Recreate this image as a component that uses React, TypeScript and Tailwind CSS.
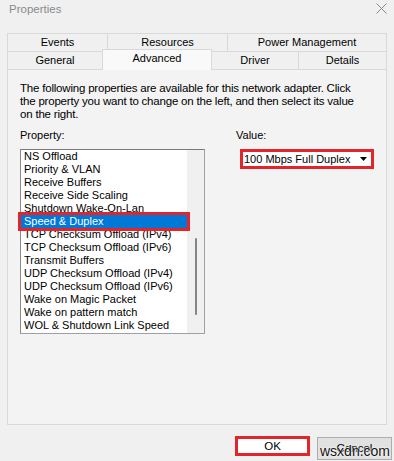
const items = [
  "NS Offload",
  "Priority & VLAN",
  "Receive Buffers",
  "Receive Side Scaling",
  "Shutdown Wake-On-Lan",
  "Speed & Duplex",
  "TCP Checksum Offload (IPv4)",
  "TCP Checksum Offload (IPv6)",
  "Transmit Buffers",
  "UDP Checksum Offload (IPv4)",
  "UDP Checksum Offload (IPv6)",
  "Wake on Magic Packet",
  "Wake on pattern match",
  "WOL & Shutdown Link Speed",
];

export default function App() {
  return (
    <div className="relative w-[394px] h-[461px] bg-[#f0f0f0] flex flex-col text-[11px] leading-[13px] text-black overflow-hidden font-['Liberation_Sans',Arial,sans-serif]">
      {/* Title bar */}
      <div className="h-[33px] flex items-start justify-between">
        <div className="pl-[9px] pt-[3px] text-[11.5px] text-[#8a8a8a]">Properties</div>
        <svg className="mr-[7px] mt-[3px]" width="11" height="11" viewBox="0 0 11 11">
          <path d="M0.5 0.5 L10.5 10.5 M10.5 0.5 L0.5 10.5" stroke="#8a8a8a" strokeWidth="1" fill="none" />
        </svg>
      </div>

      {/* Tabs + panel */}
      <div className="ml-[7px] w-[380px] flex flex-col">
        <div className="flex h-[18px]">
          <div className="w-[100px] border-t border-l border-[#d9d9d9] flex items-center justify-center">Events</div>
          <div className="w-[120px] border-t border-l border-[#d9d9d9] flex items-center justify-center">Resources</div>
          <div className="flex-1 border-t border-l border-r border-[#d9d9d9] flex items-center justify-center">Power Management</div>
        </div>
        <div className="flex h-[18px] items-end">
          <div className="w-[95px] h-[18px] border-t border-l border-[#d9d9d9] flex items-center justify-center">General</div>
          <div className="relative z-10 w-[110px] h-[21px] -mb-[1px] bg-[#f9f9f9] border-t border-l border-r border-[#d9d9d9] flex items-center justify-center pb-[3px]">Advanced</div>
          <div className="w-[86px] h-[18px] border-t border-[#d9d9d9] flex items-center justify-center">Driver</div>
          <div className="flex-1 h-[18px] border-t border-l border-r border-[#d9d9d9] flex items-center justify-center">Details</div>
        </div>

        <div className="h-[356px] border border-[#d9d9d9] bg-[#f3f3f3] pl-[12px] pt-[12px] flex flex-col">
          <div className="text-[11.5px] tracking-[-0.2px]">
            The following properties are available for this network adapter. Click
            <br />
            the property you want to change on the left, and then select its value
            <br />
            on the right.
          </div>

          <div className="mt-[8px] flex">
            <div className="w-[185px] flex flex-col">
              <div className="h-[13px]">Property:</div>
              <div className="mt-[7px] h-[185px] border border-[#a0a0a0] border-t-[#7a7a7a] border-l-[#8a8a8a] flex">
                <div className="flex-1 bg-white flex flex-col">
                  {items.map((it) =>
                    it === "Speed & Duplex" ? (
                      <div
                        key={it}
                        className="relative z-10 h-[13px] pl-[3px] whitespace-nowrap bg-[#0078d7] text-white outline outline-[3px] outline-[#e3242b]"
                      >
                        {it}
                      </div>
                    ) : (
                      <div key={it} className="h-[13px] pl-[3px] whitespace-nowrap">
                        {it}
                      </div>
                    )
                  )}
                </div>
                <div className="w-[17px] bg-[#f0f0f0] flex flex-col items-center pt-[88px]">
                  <div className="w-[2px] h-[77px] bg-[#858585] rounded-full" />
                </div>
              </div>
            </div>

            <div className="ml-[31px] flex flex-col">
              <div className="h-[13px]">Value:</div>
              <div className="mt-[7px] ml-[4px] w-[134px] h-[20px] border-[3px] border-[#e3242b] bg-white flex items-center justify-between pl-[1px] pr-[4px] whitespace-nowrap">
                <span>100 Mbps Full Duplex</span>
                <svg width="7" height="4" viewBox="0 0 7 4">
                  <path d="M0 0 L7 0 L3.5 4 Z" fill="#000" />
                </svg>
              </div>
            </div>
          </div>
        </div>
      </div>

      {/* Buttons */}
      <div className="mt-[11px] flex justify-end items-start gap-[7px] pr-[2px] text-[11.5px]">
        <div className="w-[75px] h-[20px] border-[3px] border-[#e3242b] bg-white flex items-center justify-center">OK</div>
        <div className="w-[75px] h-[23px] mt-[1px] border border-[#adadad] bg-[#e1e1e1] flex items-center justify-center">Cancel</div>
      </div>

      <div className="absolute left-[320px] top-[443px] text-[14px] leading-[16px] text-[#111] [text-shadow:0_0_2px_#fff,0_0_2px_#fff]">
        wsxdn.com
      </div>
    </div>
  );
}
